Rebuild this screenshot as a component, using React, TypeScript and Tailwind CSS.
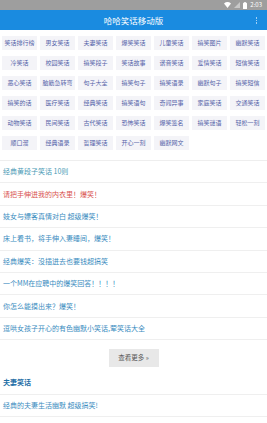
import React from "react";

const categories = [
  ["笑话排行榜", "男女笑话", "夫妻笑话", "爆笑笑话", "儿童笑话", "搞笑图片", "幽默笑话"],
  ["冷笑话", "校园笑话", "搞笑段子", "笑话故事", "谐音笑话", "爱情笑话", "短信笑话"],
  ["恶心笑话", "脑筋急转弯", "句子大全", "搞笑句子", "搞笑语录", "幽默句子", "搞笑短信"],
  ["搞笑的话", "医疗笑话", "经典笑话", "搞笑语句", "奇闻异事", "家庭笑话", "交通笑话"],
  ["动物笑话", "民间笑话", "古代笑话", "恐怖笑话", "爆笑签名", "搞笑谜语", "轻松一刻"],
  ["顺口溜", "经典语录", "哲理笑话", "开心一刻", "幽默网文"],
].flat();

const jokes = [
  { title: "请把手伸进我的内衣里！爆笑！", hot: true },
  { title: "妓女与嫖客真情对白 超级爆笑！" },
  { title: "床上看书，将手伸入妻睡间，爆笑！" },
  { title: "经典爆笑：没插进去也要钱超搞笑" },
  { title: "一个MM在应聘中的爆笑回答！！！！" },
  { title: "你怎么能摸出来？爆笑！" },
  { title: "逗哄女孩子开心的有色幽默小笑话,荤笑话大全" },
];

export default function App() {
  return (
    <div className="h-[423px] w-[267px] overflow-hidden bg-white font-['Noto_Sans_CJK_SC',sans-serif]">
      <StatusBar />

      <header className="relative flex h-[20px] items-center justify-center bg-[#1a8be0]">
        <h1 className="text-[8.5px] leading-none text-white">哈哈笑话移动版</h1>
        <span className="absolute right-[10px] top-[7px] flex flex-col gap-[1px]">
          <i className="block h-[1.5px] w-[1.5px] bg-[#9fd0f5]" />
          <i className="block h-[1.5px] w-[1.5px] bg-[#9fd0f5]" />
          <i className="block h-[1.5px] w-[1.5px] bg-[#9fd0f5]" />
        </span>
      </header>

      <nav className="grid grid-cols-7 gap-x-[3px] gap-y-[6px] border-b border-[#eeeeee] px-[2px] pb-[10px] pt-[6px]">
        {categories.map((name) => (
          <a
            key={name}
            className="flex h-[14px] items-center justify-center bg-[#f4f4f8] text-[6px] leading-none whitespace-nowrap text-[#5563a8]"
          >
            {name}
          </a>
        ))}
      </nav>

      <section>
        <Row className="text-[#4a9ab5]">经典黄段子笑话 10则</Row>
        {jokes.map((joke) => (
          <Row key={joke.title} className={joke.hot ? "text-[#d9534f]" : "text-[#3a8cc0]"}>
            {joke.title}
          </Row>
        ))}
      </section>

      <div className="flex justify-center pt-[9px] pb-[5px]">
        <button className="flex h-[18px] w-[50px] items-center justify-center bg-[#e8e8e8] text-[6.5px] text-[#555555]">
          查看更多 »
        </button>
      </div>

      <section>
        <Row className="font-bold text-[#1f6fa6]">夫妻笑话</Row>
        <Row className="text-[#3a8cc0]">经典的夫妻生活幽默 超级搞笑!</Row>
      </section>
    </div>
  );
}

function Row({ className, children }: { className: string; children: React.ReactNode }) {
  return (
    <div
      className={`flex h-[22.4px] items-center border-b border-[#efefef] px-[3px] text-[7px] leading-none ${className}`}
    >
      {children}
    </div>
  );
}

function StatusBar() {
  return (
    <div className="flex h-[10px] items-center justify-end gap-[3px] bg-[#9e9e9e] pr-[5px]">
      <svg width="7" height="6" viewBox="0 0 14 12">
        <path d="M7 12 0 3a11 11 0 0 1 14 0Z" fill="#ffffff" />
      </svg>
      <svg width="6" height="6" viewBox="0 0 12 12">
        <path d="M12 0v12H0Z" fill="#c8c8c8" />
      </svg>
      <svg width="4" height="7" viewBox="0 0 8 14">
        <rect x="2.5" y="0" width="3" height="2" fill="#ffffff" />
        <rect x="0" y="1.5" width="8" height="12.5" rx="1" fill="#ffffff" />
      </svg>
      <span className="text-[6px] leading-none text-white">2:03</span>
    </div>
  );
}
